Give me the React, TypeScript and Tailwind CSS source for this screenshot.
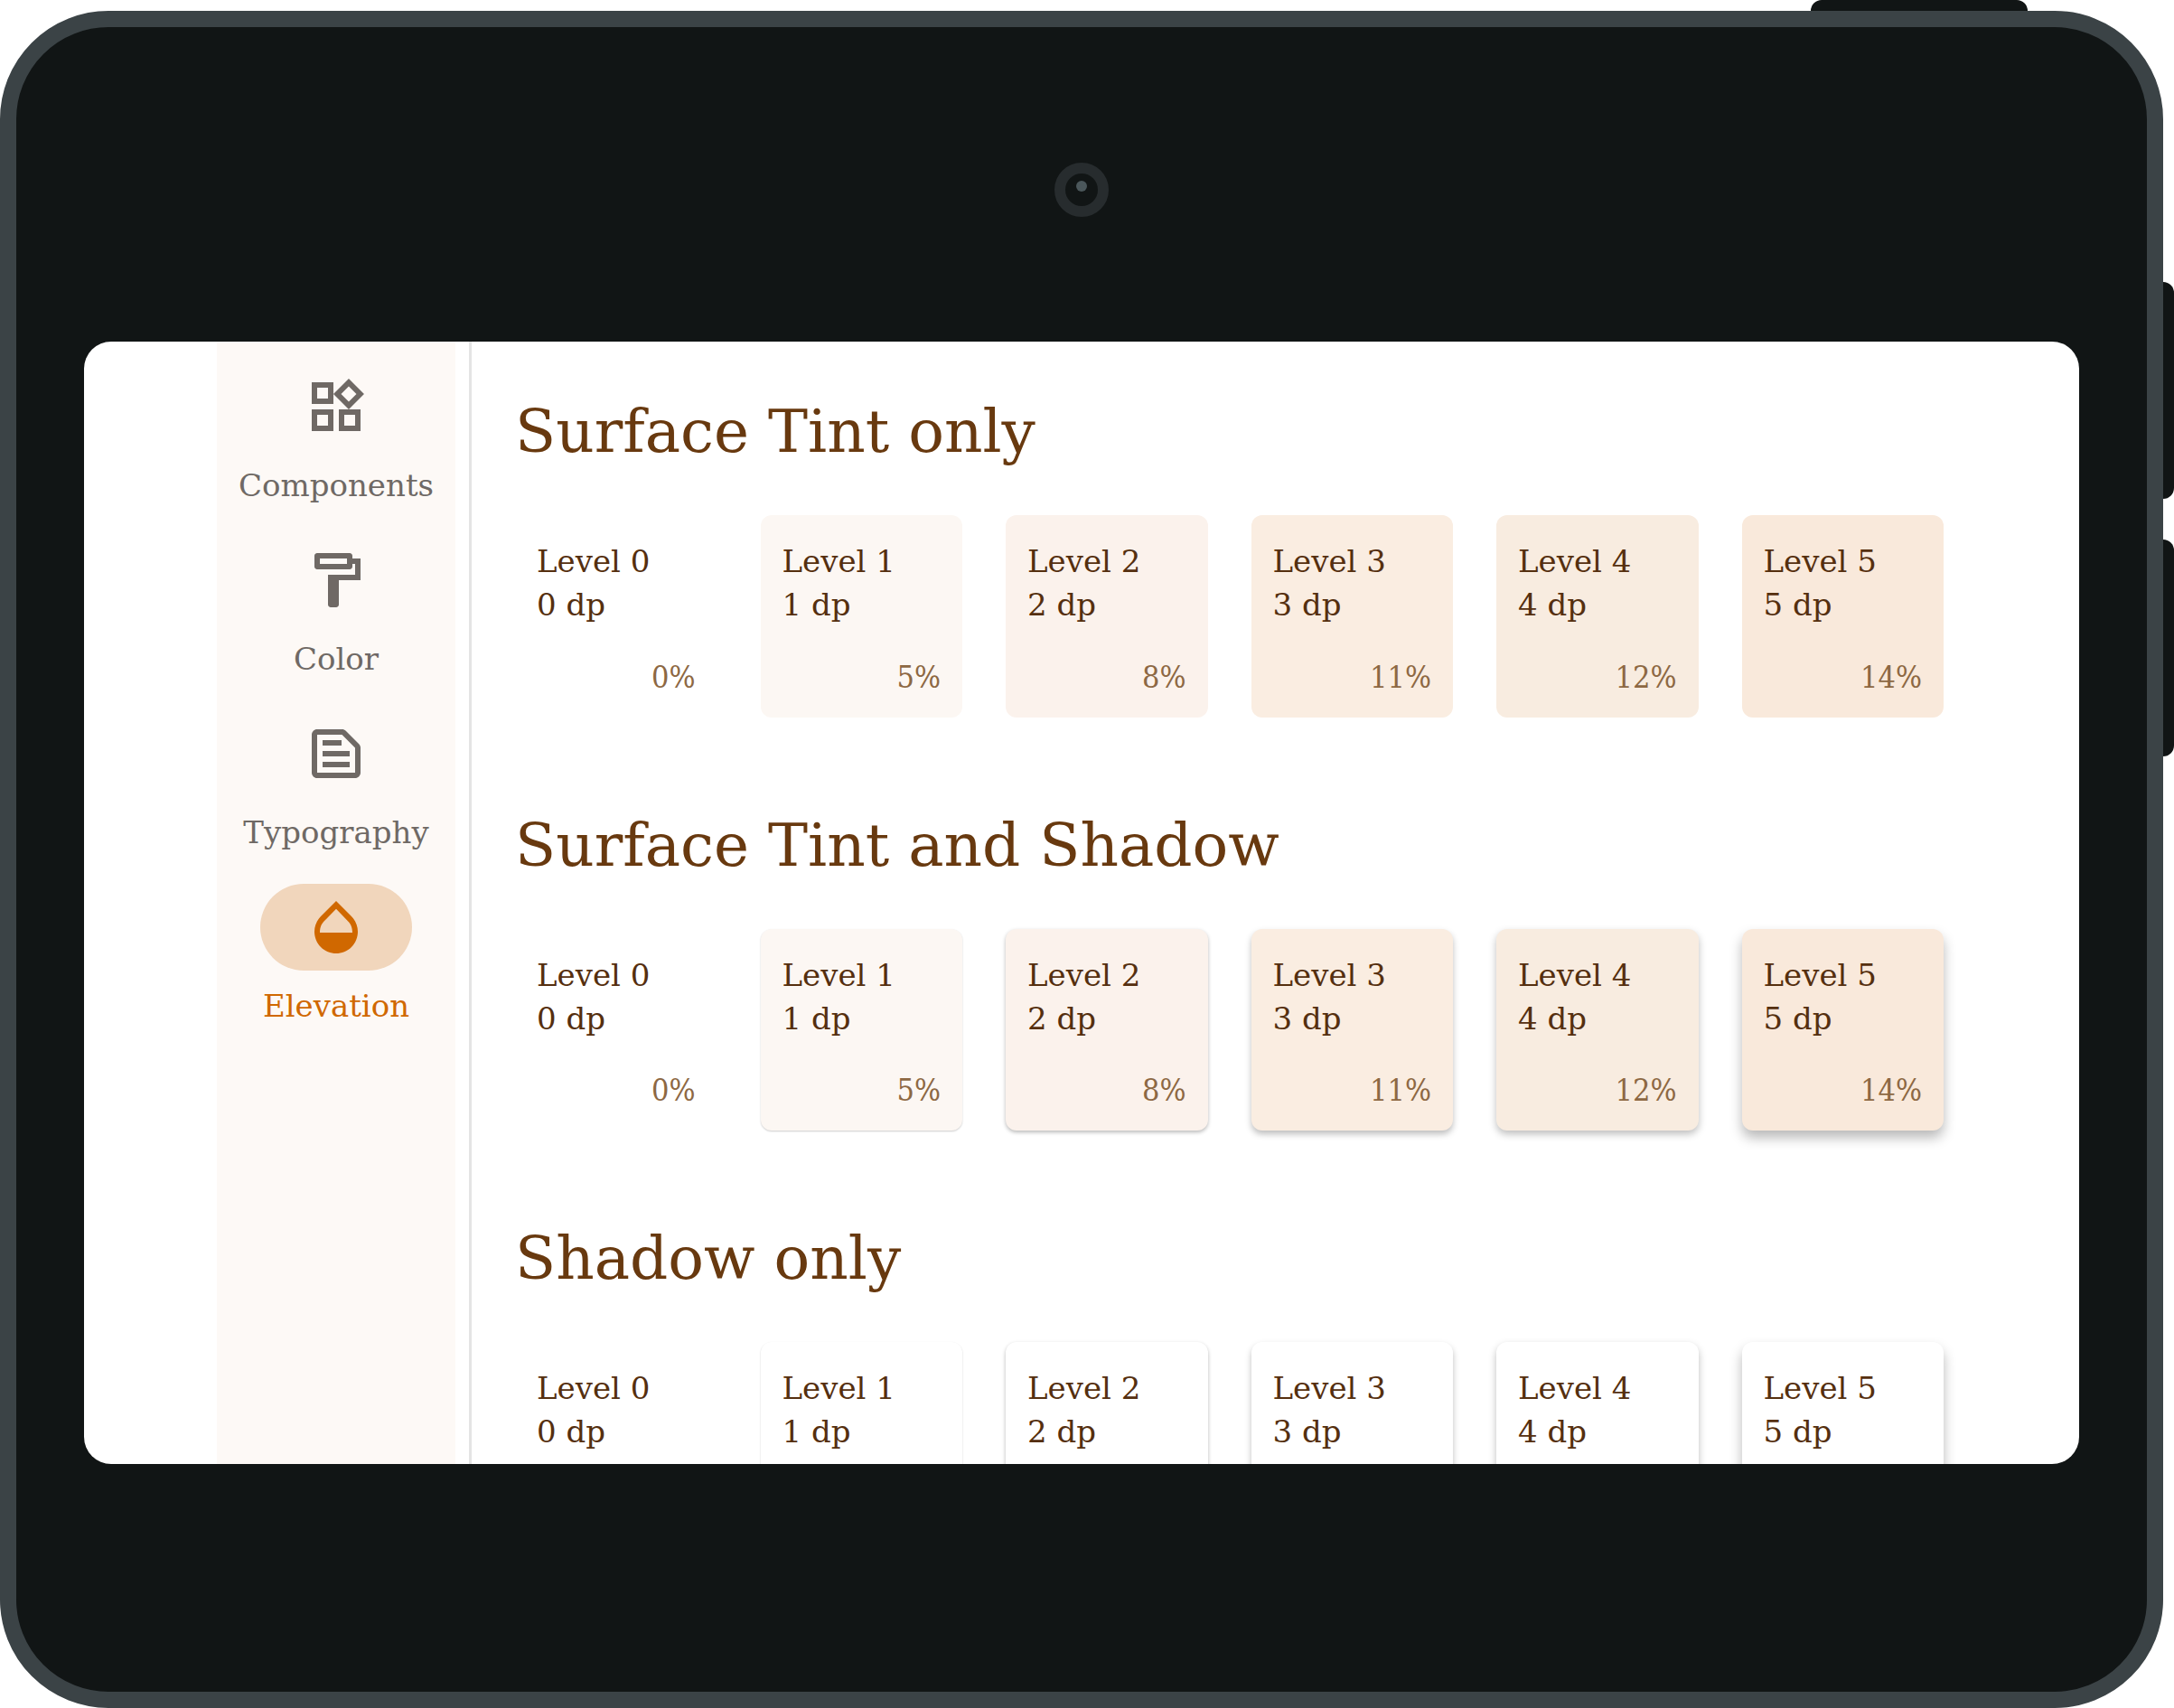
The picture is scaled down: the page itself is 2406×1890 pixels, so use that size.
const NAV = [
  {
    label: 'Components',
    path: 'M16.66 4.52l2.83 2.83-2.83 2.83-2.83-2.83 2.83-2.83M9 5v4H5V5h4m10 10v4h-4v-4h4M9 15v4H5v-4h4m7.66-13.31L11 7.34 16.66 13l5.66-5.66-5.66-5.65zM11 3H3v8h8V3zm10 10h-8v8h8v-8zm-10 0H3v8h8v-8z',
  },
  {
    label: 'Color',
    path: 'M18 4V3c0-.55-.45-1-1-1H5c-.55 0-1 .45-1 1v4c0 .55.45 1 1 1h12c.55 0 1-.45 1-1V6h1v4H9v11c0 .55.45 1 1 1h2c.55 0 1-.45 1-1v-9h8V4h-3zm-2 2H6V4h10v2z',
  },
  {
    label: 'Typography',
    path: 'M14.17 5L19 9.83V19H5V5h9.17m0-2H5c-1.1 0-2 .9-2 2v14c0 1.1.9 2 2 2h14c1.1 0 2-.9 2-2V9.83c0-.53-.21-1.04-.59-1.41l-4.83-4.83c-.37-.38-.88-.59-1.41-.59zM7 15h10v2H7v-2zm0-4h10v2H7v-2zm0-4h7v2H7V7z',
  },
  {
    label: 'Elevation',
    active: true,
    path: 'M17.66 8L12 2.35 6.34 8C4.78 9.56 4 11.64 4 13.64s.78 4.11 2.34 5.67 3.61 2.35 5.66 2.35 4.1-.79 5.66-2.35S20 15.64 20 13.64 19.22 9.56 17.66 8zM6 14c.01-2 .62-3.27 1.76-4.4L12 5.27l4.24 4.38C17.38 10.77 17.99 12 18 14H6z',
  },
];

const LEVELS = [
  { percent: '0%', tint: 'bg-white', shadow: '' },
  { percent: '5%', tint: 'bg-[#fcf7f3]', shadow: 'shadow-[0_1px_2px_rgba(0,0,0,0.2)]' },
  { percent: '8%', tint: 'bg-[#fbf2ec]', shadow: 'shadow-[0_2px_4px_rgba(0,0,0,0.28)]' },
  { percent: '11%', tint: 'bg-[#faede1]', shadow: 'shadow-[0_4px_7px_rgba(0,0,0,0.26)]' },
  { percent: '12%', tint: 'bg-[#f8ece0]', shadow: 'shadow-[0_4px_8px_rgba(0,0,0,0.26)]' },
  { percent: '14%', tint: 'bg-[#f9e9db]', shadow: 'shadow-[0_8px_14px_rgba(0,0,0,0.28)]' },
];

const SECTIONS = [
  { title: 'Surface Tint only', tinted: true, shadowed: false },
  { title: 'Surface Tint and Shadow', tinted: true, shadowed: true },
  { title: 'Shadow only', tinted: false, shadowed: true },
];

function NavRail() {
  return (
    <nav className="flex w-[264px] shrink-0 flex-col gap-[33px] bg-[#fdf9f6] pt-6">
      {NAV.map((item) => (
        <button
          key={item.label}
          type="button"
          aria-current={item.active ? 'page' : undefined}
          className={`flex flex-col items-center gap-[15px] ${item.active ? 'text-[#d06800]' : 'text-[#6f6965]'}`}
        >
          <span
            className={`flex h-24 w-[168px] items-center justify-center rounded-full ${item.active ? 'bg-[#f1d6bc]' : ''}`}
          >
            <svg viewBox="0 0 24 24" className="size-[72px] fill-current" aria-hidden="true">
              <path d={item.path} />
            </svg>
          </span>
          <span className="text-[34px] leading-[48px]">{item.label}</span>
        </button>
      ))}
    </nav>
  );
}

function ElevationSection({ title, tinted, shadowed }: { title: string; tinted: boolean; shadowed: boolean }) {
  return (
    <section className="flex shrink-0 flex-col gap-[44px]">
      <h2 className="text-[66px] leading-[96px] whitespace-nowrap text-[#68390f]">{title}</h2>
      <div className="grid grid-cols-6 gap-12">
        {LEVELS.map((level, i) => (
          <article
            key={level.percent}
            className={`flex aspect-square flex-col justify-between rounded-xl px-6 pt-[27px] pb-[21px] text-[34px] leading-[48px] whitespace-nowrap ${tinted ? level.tint : 'bg-white'} ${shadowed ? level.shadow : ''}`}
          >
            <div className="text-[#552f0f]">
              <p>Level {i}</p>
              <p>{i} dp</p>
            </div>
            <p className="text-right font-['DejaVu_Serif_Condensed','DejaVu_Serif',serif] text-[#8d6843]">
              {level.percent}
            </p>
          </article>
        ))}
      </div>
    </section>
  );
}

function Camera() {
  return (
    <div className="flex size-[60px] justify-center rounded-full border-12 border-[#272c2e] pt-2">
      <div className="size-3 rounded-full bg-[#4b575b]" />
    </div>
  );
}

export default function App() {
  return (
    <div className="flex h-screen flex-col bg-white font-['Roboto_Slab','DejaVu_Serif',serif]">
      <div className="mr-[162px] h-3 w-60 shrink-0 self-end rounded-t-xl bg-[#111515]" />
      <div className="flex min-h-0 flex-1">
        <div className="flex min-w-0 flex-1 flex-col items-center rounded-[120px] border-18 border-[#3b4346] bg-[#111515] px-[75px] pt-[150px] pb-[252px]">
          <Camera />
          <div className="mt-[138px] flex min-h-0 w-full flex-1 overflow-hidden rounded-[30px] bg-white pl-[147px]">
            <NavRail />
            <main className="ml-[15px] flex min-w-0 flex-1 flex-col gap-[94px] overflow-y-auto border-l-3 border-[#e4e4e4] pt-[52px] pr-[150px] pl-12 [scrollbar-width:none]">
              {SECTIONS.map((section) => (
                <ElevationSection key={section.title} {...section} />
              ))}
            </main>
          </div>
        </div>
        <div className="flex w-3 shrink-0 flex-col gap-[45px] pt-[300px]">
          <div className="h-60 rounded-r-xl bg-[#111515]" />
          <div className="h-60 rounded-r-xl bg-[#111515]" />
        </div>
      </div>
    </div>
  );
}
